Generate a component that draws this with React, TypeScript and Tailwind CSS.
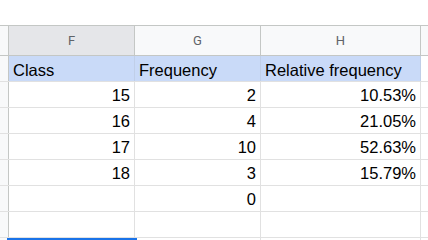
import React from 'react';

type Cell = { text: string; align?: 'left' | 'right' };

const columns = [
  { letter: 'F', width: 'w-[126px]', selected: true },
  { letter: 'G', width: 'w-[126px]', selected: false },
  { letter: 'H', width: 'w-[160px]', selected: false },
];

const header: Cell[] = [
  { text: 'Class' },
  { text: 'Frequency' },
  { text: 'Relative frequency' },
];

const rows: Cell[][] = [
  [{ text: '15', align: 'right' }, { text: '2', align: 'right' }, { text: '10.53%', align: 'right' }],
  [{ text: '16', align: 'right' }, { text: '4', align: 'right' }, { text: '21.05%', align: 'right' }],
  [{ text: '17', align: 'right' }, { text: '10', align: 'right' }, { text: '52.63%', align: 'right' }],
  [{ text: '18', align: 'right' }, { text: '3', align: 'right' }, { text: '15.79%', align: 'right' }],
  [{ text: '' }, { text: '0', align: 'right' }, { text: '' }],
  [{ text: '' }, { text: '' }, { text: '' }],
];

const App: React.FC = () => {
  return (
    <div className="w-[428px] h-[240px] overflow-hidden bg-white font-['Liberation_Sans',Arial,sans-serif] text-[16.5px] text-black">
      {/* blank strip above the column headers */}
      <div className="h-[25px] bg-white" />

      {/* column header row */}
      <div className="flex h-[31px] border-y border-[#c4c7c5] bg-[#f8f9fa]">
        <div className="w-[9px] shrink-0 border-r border-[#c4c7c5]" />
        {columns.map((col) => (
          <div
            key={col.letter}
            className={`${col.width} shrink-0 border-r border-[#c4c7c5] flex items-center justify-center text-[13px] text-[#5f6368] font-['Roboto',sans-serif] ${
              col.selected ? 'bg-[#e5e6e9]' : ''
            }`}
          >
            {col.letter}
          </div>
        ))}
        <div className="flex-1" />
      </div>

      {/* title row */}
      <div className="flex h-[26px] border-b border-[#e1e1e1]">
        <div className="w-[9px] shrink-0 border-r border-[#c4c7c5] bg-[#f8f9fa]" />
        {columns.map((col, i) => (
          <div
            key={col.letter}
            className={`${col.width} shrink-0 border-r border-[#c0cfe8] bg-[#c9daf8] flex items-end pl-[4px] pb-[3px] leading-none`}
          >
            {header[i].text}
          </div>
        ))}
        <div className="flex-1" />
      </div>

      {/* data rows */}
      {rows.map((row, r) => (
        <div key={r} className="flex h-[26px] border-b border-[#e1e1e1]">
          <div className="w-[9px] shrink-0 border-r border-[#c4c7c5] bg-[#f8f9fa]" />
          {columns.map((col, i) => (
            <div
              key={col.letter}
              className={`${col.width} shrink-0 border-r border-[#e1e1e1] flex items-end pb-[4px] px-[4px] leading-none ${
                row[i].align === 'right' ? 'justify-end' : 'justify-start'
              }`}
            >
              {row[i].text}
            </div>
          ))}
          <div className="flex-1" />
        </div>
      ))}

      {/* active cell row */}
      <div className="flex h-[26px]">
        <div className="w-[9px] shrink-0 border-r border-[#c4c7c5] bg-[#f8f9fa]" />
        <div className="relative w-[126px] shrink-0 border-r border-[#e1e1e1]">
          <div className="absolute left-[-2px] top-0 w-[128px] h-[30px] border-2 border-[#1a73e8]" />
          <div className="absolute left-[124px] top-[0px] w-[4px] h-[4px] bg-[#1a73e8]" />
        </div>
        <div className="w-[126px] shrink-0 border-r border-[#e1e1e1]" />
        <div className="w-[160px] shrink-0 border-r border-[#e1e1e1]" />
        <div className="flex-1" />
      </div>
    </div>
  );
};

export default App;
